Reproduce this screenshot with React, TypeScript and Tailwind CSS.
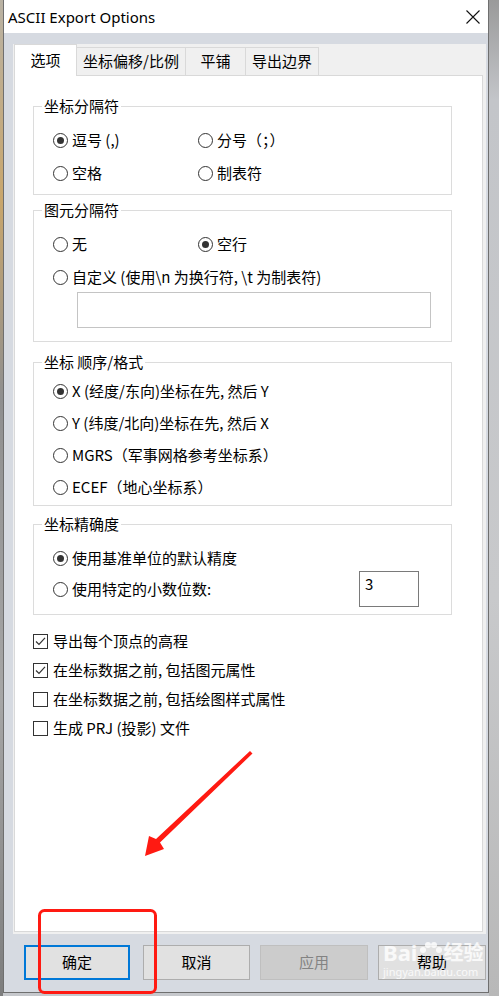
import type { ReactNode } from 'react';

const CJK = "font-['Noto_Sans_CJK_SC','Noto_Sans',sans-serif]";

function Radio({ checked = false, label }: { checked?: boolean; label: ReactNode }) {
  return (
    <div className="flex h-5 items-center">
      <span className="flex h-[15px] w-[15px] shrink-0 items-center justify-center rounded-full border border-[#333333] bg-white">
        {checked && <span className="h-[7px] w-[7px] rounded-full bg-[#333333]" />}
      </span>
      <span className="ml-[4px] whitespace-nowrap text-[15px] leading-5 text-black">{label}</span>
    </div>
  );
}

function Check({ checked = false, label }: { checked?: boolean; label: string }) {
  return (
    <div className="flex h-5 items-center">
      <span className="flex h-[15px] w-[15px] shrink-0 items-center justify-center border border-[#333333] bg-white">
        {checked && (
          <svg width="11" height="11" viewBox="0 0 11 11">
            <path d="M1 5.5 L4 8.5 L10 1.8" fill="none" stroke="#333333" strokeWidth="1.2" />
          </svg>
        )}
      </span>
      <span className="ml-[5px] whitespace-nowrap text-[15px] leading-5 text-black">{label}</span>
    </div>
  );
}

function Group({ title, className, children }: { title: string; className: string; children: ReactNode }) {
  return (
    <fieldset className={`w-[419px] border border-[#dcdcdc] ${className}`}>
      <legend className="ml-[8px] px-[2px] text-[15px] leading-5 text-black">{title}</legend>
      {children}
    </fieldset>
  );
}

function Tab({ label, active = false, width }: { label: string; active?: boolean; width: string }) {
  if (active) {
    return (
      <div className={`relative z-10 -mb-px flex h-[32px] ${width} items-center justify-center border border-b-0 border-[#d9d9d9] bg-white text-[15px]`}>
        {label}
      </div>
    );
  }
  return (
    <div className={`flex h-[28px] ${width} items-center justify-center border border-b-0 border-l-0 border-[#d9d9d9] bg-[#f0f0f0] text-[15px]`}>
      {label}
    </div>
  );
}

function DlgButton({ label, className }: { label: string; className: string }) {
  return (
    <div className={`flex h-[35px] items-center justify-center text-[15px] ${className}`}>{label}</div>
  );
}

export default function App() {
  return (
    <div className={`relative flex h-[996px] w-[499px] overflow-hidden bg-[#c6c8cc] ${CJK}`}>
      <div className="h-full w-[3px] bg-[linear-gradient(180deg,#b9b2a4,#c9a66c_20%,#8f8f8f_40%,#a6a6a6_70%,#7d7d7d)]" />

      <div className="flex h-[993px] w-[486px] flex-col border-x border-b border-[#6f6f6f] bg-[#d6dae1]">
        {/* title bar */}
        <div className="flex h-[33px] shrink-0 items-center justify-between bg-white pl-[4px] pr-[8px]">
          <span className="font-['Noto_Sans',sans-serif] text-[15px] leading-5 text-black">ASCII Export Options</span>
          <svg width="14" height="14" viewBox="0 0 14 14" className="mt-[1px]">
            <path d="M0.5 0.5 L13.5 13.5 M13.5 0.5 L0.5 13.5" stroke="#111" strokeWidth="1.1" />
          </svg>
        </div>

        <div className="flex flex-1 flex-col pl-[9px] pr-[2px] pt-[11px]">
          <div className="w-[473px] bg-[#f0f0f0] pb-[2px]">
            <div className="flex h-[31px] items-end pl-[1px]">
              <Tab label="选项" active width="w-[63px]" />
              <Tab label="坐标偏移/比例" width="w-[109px]" />
              <Tab label="平铺" width="w-[60px]" />
              <Tab label="导出边界" width="w-[73px]" />
            </div>

            <div className="ml-[1px] h-[857px] w-[469px] border border-[#d9d9d9] bg-white pl-[18px] pt-[20px]">
              <Group title="坐标分隔符" className="">
                <div className="grid grid-cols-[145px_1fr] gap-y-[13px] pb-[11px] pl-[19px] pt-[14px]">
                  <Radio checked label="逗号 (,)" />
                  <Radio label="分号（；）" />
                  <Radio label="空格" />
                  <Radio label="制表符" />
                </div>
              </Group>

              <Group title="图元分隔符" className="mt-[5px]">
                <div className="pb-[13px] pl-[19px] pt-[14px]">
                  <div className="grid grid-cols-[145px_1fr] gap-y-[13px]">
                    <Radio label="无" />
                    <Radio checked label="空行" />
                    <div className="col-span-2">
                      <Radio label="自定义 (使用\n 为换行符, \t 为制表符)" />
                    </div>
                  </div>
                  <div className="ml-[24px] mt-[5px] h-[36px] w-[354px] border border-[#c4c4c4] bg-white" />
                </div>
              </Group>

              <Group title="坐标 顺序/格式" className="mt-[10px]">
                <div className="flex flex-col gap-y-[12px] pb-[8px] pl-[19px] pt-[9px]">
                  <Radio checked label="X (经度/东向)坐标在先, 然后 Y" />
                  <Radio label="Y (纬度/北向)坐标在先, 然后 X" />
                  <Radio label="MGRS（军事网格参考坐标系）" />
                  <Radio label="ECEF（地心坐标系）" />
                </div>
              </Group>

              <Group title="坐标精确度" className="mt-[8px]">
                <div className="flex flex-col gap-y-[3px] pb-[7px] pl-[19px] pt-[14px]">
                  <Radio checked label="使用基准单位的默认精度" />
                  <div className="flex items-center">
                    <Radio label="使用特定的小数位数:" />
                    <div className="ml-auto mr-[32px] h-[36px] w-[60px] border border-[#7a7a7a] bg-white pl-[5px] pt-[2px] text-[15px] leading-5">
                      3
                    </div>
                  </div>
                </div>
              </Group>

              <div className="mt-[16px] flex flex-col gap-y-[9px]">
                <Check checked label="导出每个顶点的高程" />
                <Check checked label="在坐标数据之前, 包括图元属性" />
                <Check label="在坐标数据之前, 包括绘图样式属性" />
                <Check label="生成 PRJ (投影) 文件" />
              </div>
            </div>
          </div>

          <div className="mt-[11px] flex pl-[11px]">
            <DlgButton label="确定" className="w-[106px] border-2 border-[#0078d7] bg-[#e1e1e1] text-black" />
            <DlgButton label="取消" className="ml-[13px] w-[107px] border border-[#adadad] bg-[#e1e1e1] text-black" />
            <DlgButton label="应用" className="ml-[10px] w-[108px] border border-[#bfbfbf] bg-[#cccccc] text-[#838383]" />
            <DlgButton label="帮助" className="ml-[10px] w-[108px] border border-[#adadad] bg-[#e1e1e1] text-black" />
          </div>
        </div>
      </div>

      <div className="h-full flex-1 bg-[linear-gradient(180deg,#9a9a9a,#c3c5c9_10%,#c8c9cb_60%,#b8b8b8)]" />

      {/* watermark */}
      <div className="pointer-events-none absolute left-[383px] top-[940px] flex flex-col items-start text-white/80">
        <div className="flex items-end font-['Noto_Sans',sans-serif] text-[22px] font-bold leading-6">
          <span>Bai</span>
          <svg width="26" height="22" viewBox="0 0 26 22" className="mb-[1px]">
            <circle cx="6" cy="9" r="3" fill="white" fillOpacity="0.8" />
            <circle cx="11" cy="4" r="3" fill="white" fillOpacity="0.8" />
            <circle cx="17" cy="4" r="3" fill="white" fillOpacity="0.8" />
            <circle cx="22" cy="9" r="3" fill="white" fillOpacity="0.8" />
          </svg>
          <span className={`text-[20px] ${CJK}`}>经验</span>
        </div>
        <span className="font-['Noto_Sans',sans-serif] text-[11px] leading-4 text-white/80">jingyan.baidu.com</span>
      </div>

      {/* annotations */}
      <svg className="pointer-events-none absolute left-0 top-0" width="499" height="996" viewBox="0 0 499 996">
        <polygon
          points="250,751 252.5,753.5 160,842.5 164,849 145,856 149,836 156,839"
          fill="#ff1a12"
        />
        <rect x="39.5" y="910.5" width="116" height="82" rx="5" fill="none" stroke="#ff1a12" strokeWidth="3" />
      </svg>
    </div>
  );
}
